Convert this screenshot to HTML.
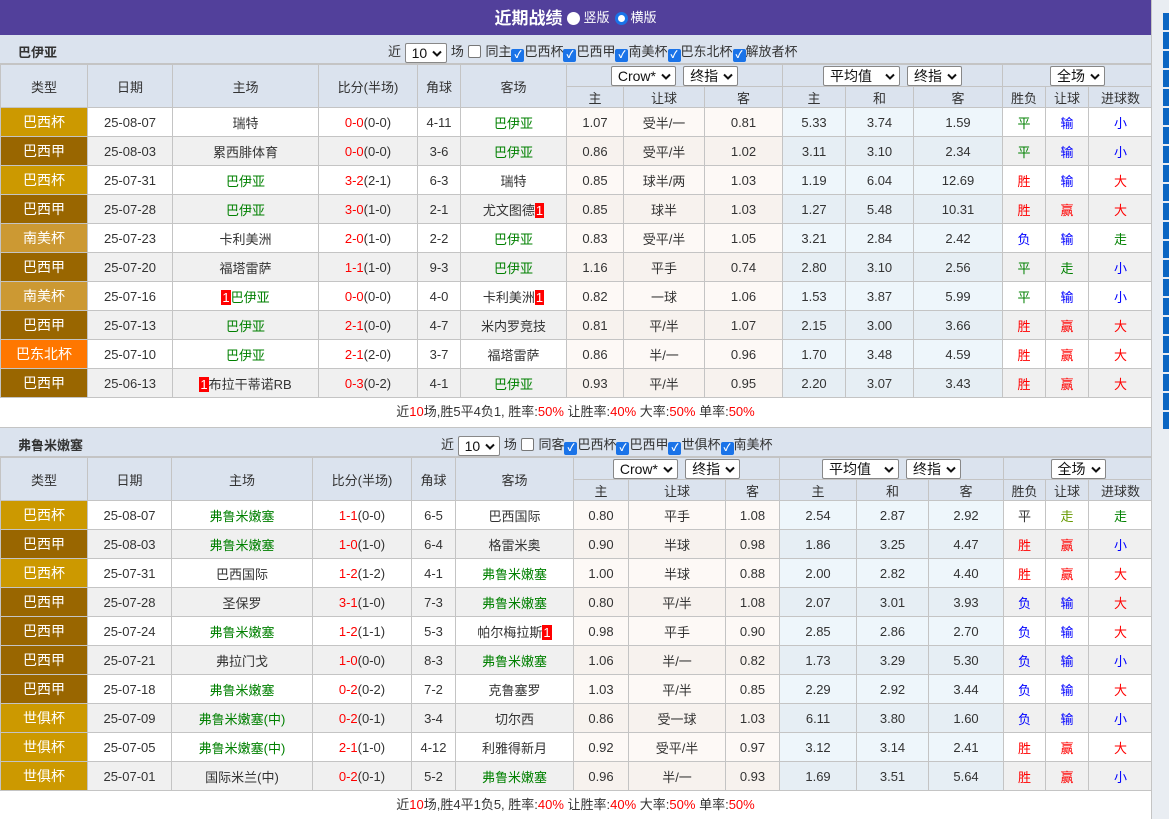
<!DOCTYPE html>
<html><head><meta charset="utf-8">
<style>
*{box-sizing:border-box;margin:0;padding:0}
body{width:1169px;height:819px;overflow:hidden;background:#fff;font-family:"Liberation Sans","Noto Sans CJK SC",sans-serif;font-size:13px;color:#333;position:relative}
#main{position:absolute;left:0;top:0;width:1152px;border-right:1px solid #c4c4c4;height:819px;overflow:hidden}
#strip{position:absolute;left:1152px;top:0;width:17px;height:819px;background:#e9edf2}
.blk{position:absolute;left:1163px;width:6px;height:17px;background:#0b66c3}
.title{height:35px;background:#52409b;color:#fff;text-align:center;line-height:35px;font-size:13px}
.title b{font-size:17px;vertical-align:middle}
.rad{display:inline-block;width:13px;height:13px;border-radius:50%;background:#fff;vertical-align:middle;margin:0 3px 0 5px}
.rad.on{border:3px solid #1a73e8}
.bar{height:29px;background:#dbe3ee;position:relative;border-bottom:1px solid #c4c4c4}
.bar .nm{position:absolute;left:18px;top:7px;font-weight:bold;font-size:13px;color:#333}
.bar .ctl{position:absolute;top:6px;white-space:nowrap;font-size:13px}
.sel{display:inline-block;border:1px solid #888;background:#fff;border-radius:2px;height:20px;line-height:18px;padding:0 4px 0 6px;font-size:14px;vertical-align:middle;color:#111}
.sel svg{margin-left:5px;vertical-align:1px}
.cb{display:inline-block;width:13px;height:13px;border:1px solid #777;border-radius:2px;vertical-align:-2px;margin:0 1px 0 4px;background:#fff}
.cb.on{background:#1a73e8;border-color:#1a73e8;color:#fff;font-size:10px;line-height:11px;text-align:center;font-weight:bold;margin:0}
table{border-collapse:collapse;table-layout:fixed;width:1152px}
td,th{border:1px solid #c4c4c4;text-align:center;font-weight:normal;height:29px;white-space:nowrap;overflow:hidden;padding:0}
th{background:#dbe3ee;height:22px}
tr.h2 th{height:21px}
tr:nth-child(even) td{background:#f0f0f0}
tr:nth-child(odd) td{background:#fff}
td.o{background:#fdf9f6!important}
tr:nth-child(even) td.o{background:#f7f2ee!important}
td.p{background:#eef6fb!important}
tr:nth-child(even) td.p{background:#e6eef4!important}
td.t{color:#fff!important;font-size:14px}
.c1{background:#cc9900!important}.c2{background:#996600!important}.c3{background:#cc9933!important}.c4{background:#ff7700!important}
.g{color:#008000}.r{color:#f00}.b{color:#00f}.y{color:#669900}
.k{background:#f00;color:#fff;padding:0 1px}
.sum{height:30px;line-height:28px;text-align:center;background:#fff;border-bottom:1px solid #c4c4c4}
</style></head><body>
<svg width="0" height="0" style="position:absolute"><symbol id="v" viewBox="0 0 10 7"><polyline points="1,1.5 5,5.5 9,1.5" fill="none" stroke="#111" stroke-width="2"/></symbol></svg>
<div id="strip"></div>
<div class="blk" style="top:13px"></div><div class="blk" style="top:32px"></div><div class="blk" style="top:51px"></div><div class="blk" style="top:70px"></div><div class="blk" style="top:89px"></div><div class="blk" style="top:108px"></div><div class="blk" style="top:127px"></div><div class="blk" style="top:146px"></div><div class="blk" style="top:165px"></div><div class="blk" style="top:184px"></div><div class="blk" style="top:203px"></div><div class="blk" style="top:222px"></div><div class="blk" style="top:241px"></div><div class="blk" style="top:260px"></div><div class="blk" style="top:279px"></div><div class="blk" style="top:298px"></div><div class="blk" style="top:317px"></div><div class="blk" style="top:336px"></div><div class="blk" style="top:355px"></div><div class="blk" style="top:374px"></div><div class="blk" style="top:393px"></div><div class="blk" style="top:412px"></div>
<div id="main">
<div class="title"><b>近期战绩</b><span class="rad"></span>竖版<span class="rad on"></span>横版</div>
<div class="bar"><span class="nm">巴伊亚</span><span class="ctl" style="left:388px">近 <span class="sel">10<svg width="10" height="7"><use href="#v"/></svg></span> 场<span class="cb"></span> 同主<span class="cb on">✓</span>巴西杯<span class="cb on">✓</span>巴西甲<span class="cb on">✓</span>南美杯<span class="cb on">✓</span>巴东北杯<span class="cb on">✓</span>解放者杯</span></div>
<table>
<colgroup><col style="width:87px"><col style="width:85px"><col style="width:146px"><col style="width:99px"><col style="width:43px"><col style="width:106px"><col style="width:57px"><col style="width:81px"><col style="width:78px"><col style="width:63px"><col style="width:68px"><col style="width:89px"><col style="width:43px"><col style="width:43px"><col style="width:64px"></colgroup>
<tr><th rowspan="2">类型</th><th rowspan="2">日期</th><th rowspan="2">主场</th><th rowspan="2">比分(半场)</th><th rowspan="2">角球</th><th rowspan="2">客场</th><th colspan="3"><span class="sel">Crow*<svg width="10" height="7"><use href="#v"/></svg></span>&nbsp;&nbsp;<span class="sel">终指<svg width="10" height="7"><use href="#v"/></svg></span></th><th colspan="3"><span class="sel">平均值&nbsp;&nbsp;<svg width="10" height="7"><use href="#v"/></svg></span>&nbsp;&nbsp;<span class="sel">终指<svg width="10" height="7"><use href="#v"/></svg></span></th><th colspan="3"><span class="sel">全场<svg width="10" height="7"><use href="#v"/></svg></span></th></tr>
<tr class="h2"><th>主</th><th>让球</th><th>客</th><th>主</th><th>和</th><th>客</th><th>胜负</th><th>让球</th><th>进球数</th></tr>
<tr><td class="t c1">巴西杯</td><td>25-08-07</td><td>瑞特</td><td><span class="r">0-0</span>(0-0)</td><td>4-11</td><td class="g">巴伊亚</td><td class="o">1.07</td><td class="o">受半/一</td><td class="o">0.81</td><td class="p">5.33</td><td class="p">3.74</td><td class="p">1.59</td><td class="g">平</td><td class="b">输</td><td class="b">小</td></tr>
<tr><td class="t c2">巴西甲</td><td>25-08-03</td><td>累西腓体育</td><td><span class="r">0-0</span>(0-0)</td><td>3-6</td><td class="g">巴伊亚</td><td class="o">0.86</td><td class="o">受平/半</td><td class="o">1.02</td><td class="p">3.11</td><td class="p">3.10</td><td class="p">2.34</td><td class="g">平</td><td class="b">输</td><td class="b">小</td></tr>
<tr><td class="t c1">巴西杯</td><td>25-07-31</td><td class="g">巴伊亚</td><td><span class="r">3-2</span>(2-1)</td><td>6-3</td><td>瑞特</td><td class="o">0.85</td><td class="o">球半/两</td><td class="o">1.03</td><td class="p">1.19</td><td class="p">6.04</td><td class="p">12.69</td><td class="r">胜</td><td class="b">输</td><td class="r">大</td></tr>
<tr><td class="t c2">巴西甲</td><td>25-07-28</td><td class="g">巴伊亚</td><td><span class="r">3-0</span>(1-0)</td><td>2-1</td><td>尤文图德<span class="k">1</span></td><td class="o">0.85</td><td class="o">球半</td><td class="o">1.03</td><td class="p">1.27</td><td class="p">5.48</td><td class="p">10.31</td><td class="r">胜</td><td class="r">赢</td><td class="r">大</td></tr>
<tr><td class="t c3">南美杯</td><td>25-07-23</td><td>卡利美洲</td><td><span class="r">2-0</span>(1-0)</td><td>2-2</td><td class="g">巴伊亚</td><td class="o">0.83</td><td class="o">受平/半</td><td class="o">1.05</td><td class="p">3.21</td><td class="p">2.84</td><td class="p">2.42</td><td class="b">负</td><td class="b">输</td><td class="g">走</td></tr>
<tr><td class="t c2">巴西甲</td><td>25-07-20</td><td>福塔雷萨</td><td><span class="r">1-1</span>(1-0)</td><td>9-3</td><td class="g">巴伊亚</td><td class="o">1.16</td><td class="o">平手</td><td class="o">0.74</td><td class="p">2.80</td><td class="p">3.10</td><td class="p">2.56</td><td class="g">平</td><td class="g">走</td><td class="b">小</td></tr>
<tr><td class="t c3">南美杯</td><td>25-07-16</td><td><span class="k">1</span><span class="g">巴伊亚</span></td><td><span class="r">0-0</span>(0-0)</td><td>4-0</td><td>卡利美洲<span class="k">1</span></td><td class="o">0.82</td><td class="o">一球</td><td class="o">1.06</td><td class="p">1.53</td><td class="p">3.87</td><td class="p">5.99</td><td class="g">平</td><td class="b">输</td><td class="b">小</td></tr>
<tr><td class="t c2">巴西甲</td><td>25-07-13</td><td class="g">巴伊亚</td><td><span class="r">2-1</span>(0-0)</td><td>4-7</td><td>米内罗竞技</td><td class="o">0.81</td><td class="o">平/半</td><td class="o">1.07</td><td class="p">2.15</td><td class="p">3.00</td><td class="p">3.66</td><td class="r">胜</td><td class="r">赢</td><td class="r">大</td></tr>
<tr><td class="t c4">巴东北杯</td><td>25-07-10</td><td class="g">巴伊亚</td><td><span class="r">2-1</span>(2-0)</td><td>3-7</td><td>福塔雷萨</td><td class="o">0.86</td><td class="o">半/一</td><td class="o">0.96</td><td class="p">1.70</td><td class="p">3.48</td><td class="p">4.59</td><td class="r">胜</td><td class="r">赢</td><td class="r">大</td></tr>
<tr><td class="t c2">巴西甲</td><td>25-06-13</td><td><span class="k">1</span>布拉干蒂诺RB</td><td><span class="r">0-3</span>(0-2)</td><td>4-1</td><td class="g">巴伊亚</td><td class="o">0.93</td><td class="o">平/半</td><td class="o">0.95</td><td class="p">2.20</td><td class="p">3.07</td><td class="p">3.43</td><td class="r">胜</td><td class="r">赢</td><td class="r">大</td></tr>
</table>
<div class="sum">近<span class="r">10</span>场,胜5平4负1, 胜率:<span class="r">50%</span> 让胜率:<span class="r">40%</span> 大率:<span class="r">50%</span> 单率:<span class="r">50%</span></div>
<div class="bar"><span class="nm">弗鲁米嫩塞</span><span class="ctl" style="left:441px">近 <span class="sel">10<svg width="10" height="7"><use href="#v"/></svg></span> 场<span class="cb"></span> 同客<span class="cb on">✓</span>巴西杯<span class="cb on">✓</span>巴西甲<span class="cb on">✓</span>世俱杯<span class="cb on">✓</span>南美杯</span></div>
<table>
<colgroup><col style="width:87px"><col style="width:84px"><col style="width:141px"><col style="width:99px"><col style="width:44px"><col style="width:118px"><col style="width:55px"><col style="width:97px"><col style="width:54px"><col style="width:77px"><col style="width:72px"><col style="width:75px"><col style="width:42px"><col style="width:43px"><col style="width:64px"></colgroup>
<tr><th rowspan="2">类型</th><th rowspan="2">日期</th><th rowspan="2">主场</th><th rowspan="2">比分(半场)</th><th rowspan="2">角球</th><th rowspan="2">客场</th><th colspan="3"><span class="sel">Crow*<svg width="10" height="7"><use href="#v"/></svg></span>&nbsp;&nbsp;<span class="sel">终指<svg width="10" height="7"><use href="#v"/></svg></span></th><th colspan="3"><span class="sel">平均值&nbsp;&nbsp;<svg width="10" height="7"><use href="#v"/></svg></span>&nbsp;&nbsp;<span class="sel">终指<svg width="10" height="7"><use href="#v"/></svg></span></th><th colspan="3"><span class="sel">全场<svg width="10" height="7"><use href="#v"/></svg></span></th></tr>
<tr class="h2"><th>主</th><th>让球</th><th>客</th><th>主</th><th>和</th><th>客</th><th>胜负</th><th>让球</th><th>进球数</th></tr>
<tr><td class="t c1">巴西杯</td><td>25-08-07</td><td class="g">弗鲁米嫩塞</td><td><span class="r">1-1</span>(0-0)</td><td>6-5</td><td>巴西国际</td><td class="o">0.80</td><td class="o">平手</td><td class="o">1.08</td><td class="p">2.54</td><td class="p">2.87</td><td class="p">2.92</td><td>平</td><td class="y">走</td><td class="g">走</td></tr>
<tr><td class="t c2">巴西甲</td><td>25-08-03</td><td class="g">弗鲁米嫩塞</td><td><span class="r">1-0</span>(1-0)</td><td>6-4</td><td>格雷米奥</td><td class="o">0.90</td><td class="o">半球</td><td class="o">0.98</td><td class="p">1.86</td><td class="p">3.25</td><td class="p">4.47</td><td class="r">胜</td><td class="r">赢</td><td class="b">小</td></tr>
<tr><td class="t c1">巴西杯</td><td>25-07-31</td><td>巴西国际</td><td><span class="r">1-2</span>(1-2)</td><td>4-1</td><td class="g">弗鲁米嫩塞</td><td class="o">1.00</td><td class="o">半球</td><td class="o">0.88</td><td class="p">2.00</td><td class="p">2.82</td><td class="p">4.40</td><td class="r">胜</td><td class="r">赢</td><td class="r">大</td></tr>
<tr><td class="t c2">巴西甲</td><td>25-07-28</td><td>圣保罗</td><td><span class="r">3-1</span>(1-0)</td><td>7-3</td><td class="g">弗鲁米嫩塞</td><td class="o">0.80</td><td class="o">平/半</td><td class="o">1.08</td><td class="p">2.07</td><td class="p">3.01</td><td class="p">3.93</td><td class="b">负</td><td class="b">输</td><td class="r">大</td></tr>
<tr><td class="t c2">巴西甲</td><td>25-07-24</td><td class="g">弗鲁米嫩塞</td><td><span class="r">1-2</span>(1-1)</td><td>5-3</td><td>帕尔梅拉斯<span class="k">1</span></td><td class="o">0.98</td><td class="o">平手</td><td class="o">0.90</td><td class="p">2.85</td><td class="p">2.86</td><td class="p">2.70</td><td class="b">负</td><td class="b">输</td><td class="r">大</td></tr>
<tr><td class="t c2">巴西甲</td><td>25-07-21</td><td>弗拉门戈</td><td><span class="r">1-0</span>(0-0)</td><td>8-3</td><td class="g">弗鲁米嫩塞</td><td class="o">1.06</td><td class="o">半/一</td><td class="o">0.82</td><td class="p">1.73</td><td class="p">3.29</td><td class="p">5.30</td><td class="b">负</td><td class="b">输</td><td class="b">小</td></tr>
<tr><td class="t c2">巴西甲</td><td>25-07-18</td><td class="g">弗鲁米嫩塞</td><td><span class="r">0-2</span>(0-2)</td><td>7-2</td><td>克鲁塞罗</td><td class="o">1.03</td><td class="o">平/半</td><td class="o">0.85</td><td class="p">2.29</td><td class="p">2.92</td><td class="p">3.44</td><td class="b">负</td><td class="b">输</td><td class="r">大</td></tr>
<tr><td class="t c1">世俱杯</td><td>25-07-09</td><td class="g">弗鲁米嫩塞(中)</td><td><span class="r">0-2</span>(0-1)</td><td>3-4</td><td>切尔西</td><td class="o">0.86</td><td class="o">受一球</td><td class="o">1.03</td><td class="p">6.11</td><td class="p">3.80</td><td class="p">1.60</td><td class="b">负</td><td class="b">输</td><td class="b">小</td></tr>
<tr><td class="t c1">世俱杯</td><td>25-07-05</td><td class="g">弗鲁米嫩塞(中)</td><td><span class="r">2-1</span>(1-0)</td><td>4-12</td><td>利雅得新月</td><td class="o">0.92</td><td class="o">受平/半</td><td class="o">0.97</td><td class="p">3.12</td><td class="p">3.14</td><td class="p">2.41</td><td class="r">胜</td><td class="r">赢</td><td class="r">大</td></tr>
<tr><td class="t c1">世俱杯</td><td>25-07-01</td><td>国际米兰(中)</td><td><span class="r">0-2</span>(0-1)</td><td>5-2</td><td class="g">弗鲁米嫩塞</td><td class="o">0.96</td><td class="o">半/一</td><td class="o">0.93</td><td class="p">1.69</td><td class="p">3.51</td><td class="p">5.64</td><td class="r">胜</td><td class="r">赢</td><td class="b">小</td></tr>
</table>
<div class="sum">近<span class="r">10</span>场,胜4平1负5, 胜率:<span class="r">40%</span> 让胜率:<span class="r">40%</span> 大率:<span class="r">50%</span> 单率:<span class="r">50%</span></div>
</div>
</body></html>
